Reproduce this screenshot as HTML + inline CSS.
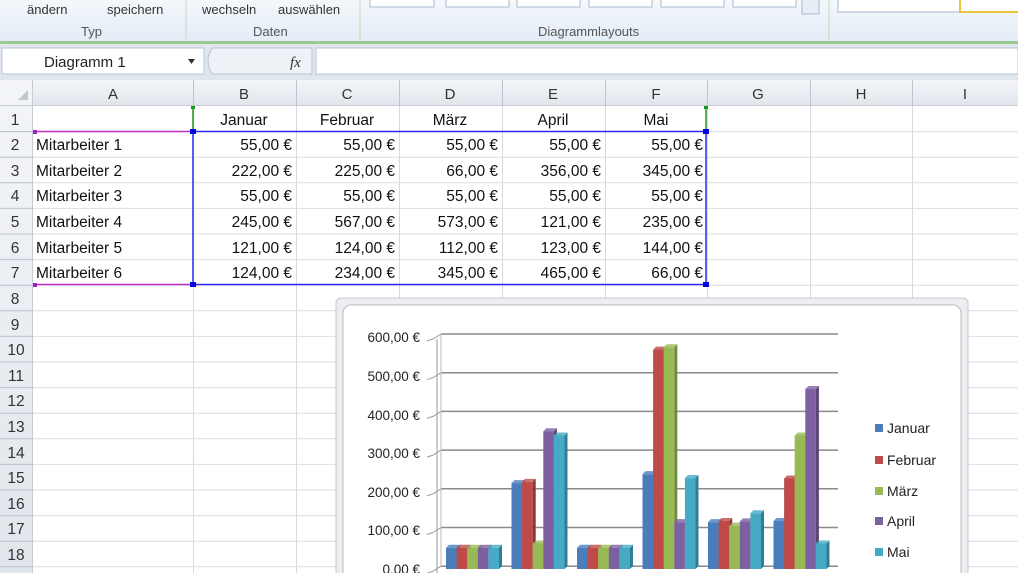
<!DOCTYPE html>
<html><head><meta charset="utf-8"><style>
body{margin:0;width:1018px;height:573px;overflow:hidden;background:#fff;font-family:"Liberation Sans",sans-serif}
svg{display:block}
</style></head><body>
<svg id="s" width="1018" height="573" xmlns="http://www.w3.org/2000/svg" font-family="Liberation Sans, sans-serif">
<defs>
<linearGradient id="rib" x1="0" y1="0" x2="0" y2="1"><stop offset="0" stop-color="#f4f8fc"/><stop offset="1" stop-color="#e4ecf6"/></linearGradient>
<linearGradient id="hdr" x1="0" y1="0" x2="0" y2="1"><stop offset="0" stop-color="#f3f5f8"/><stop offset="1" stop-color="#e1e6ec"/></linearGradient>
</defs>
<rect x="0" y="0" width="1018" height="42" fill="url(#rib)"/>
<line x1="186" y1="0" x2="186" y2="40" stroke="#c5d9b4"/>
<line x1="360" y1="0" x2="360" y2="40" stroke="#c5d9b4"/>
<line x1="829" y1="0" x2="829" y2="40" stroke="#c5d9b4"/>
<text x="27" y="14" font-size="13" fill="#333">ändern</text>
<text x="107" y="14" font-size="13" fill="#333">speichern</text>
<text x="81" y="36" font-size="13" fill="#555">Typ</text>
<text x="202" y="14" font-size="13" fill="#333">wechseln</text>
<text x="278" y="14" font-size="13" fill="#333">auswählen</text>
<text x="253" y="36" font-size="13" fill="#555">Daten</text>
<text x="538" y="36" font-size="13" fill="#555">Diagrammlayouts</text>
<g fill="#fff" stroke="#a8b8cc">
<rect x="370" y="-4" width="64" height="11"/><rect x="446" y="-4" width="63" height="11"/>
<rect x="517" y="-4" width="63" height="11"/><rect x="589" y="-4" width="63" height="11"/>
<rect x="661" y="-4" width="63" height="11"/><rect x="733" y="-4" width="63" height="11"/>
<rect x="802" y="-4" width="17" height="18" fill="#e8eef6"/>
<rect x="838" y="-4" width="200" height="16"/>
</g>
<rect x="960" y="-4" width="70" height="16" fill="#fff" stroke="#e8c43c" stroke-width="2"/>
<rect x="0" y="41" width="1018" height="3" fill="#9cc98c"/>
<rect x="0" y="44" width="1018" height="36" fill="#dfe6ee"/>
<rect x="2" y="48" width="202" height="26" fill="#fff" stroke="#b8c4d2"/>
<text x="44" y="67" font-size="15" fill="#222">Diagramm 1</text>
<path d="M188 59 l7 0 l-3.5 5z" fill="#333"/>
<path d="M212 48 h100 v26 h-100 q-8 -13 0 -26z" fill="#eef2f6" stroke="#b8c4d2"/>
<text x="290" y="67" font-size="15" font-style="italic" font-family="Liberation Serif, serif" fill="#333">fx</text>
<rect x="316" y="48" width="702" height="26" fill="#fff" stroke="#b8c4d2"/>
<rect x="0" y="80" width="1018" height="26" fill="url(#hdr)"/>
<rect x="0" y="80" width="33" height="493" fill="url(#hdr)"/>
<path d="M18 100 l10 -10 v10z" fill="#c0c8d2"/>
<g stroke="#c6ccd4">
<line x1="0" y1="105.5" x2="1018" y2="105.5"/><line x1="32.5" y1="80" x2="32.5" y2="573"/>
</g>
<g id="grid" stroke="#d9dde3"></g>
<g font-size="15" fill="#333" text-anchor="middle">
<text x="113" y="99">A</text><text x="244" y="99">B</text><text x="347" y="99">C</text><text x="450" y="99">D</text><text x="553" y="99">E</text><text x="656" y="99">F</text><text x="758" y="99">G</text><text x="861" y="99">H</text><text x="965" y="99">I</text>
</g>
<g font-size="15.5" fill="#333" text-anchor="middle">
<text x="15" y="125">1</text><text x="15" y="150">2</text><text x="15" y="176">3</text><text x="15" y="201">4</text><text x="15" y="227">5</text><text x="15" y="253">6</text><text x="15" y="278">7</text><text x="15" y="304">8</text><text x="15" y="330">9</text><text x="16" y="355">10</text><text x="16" y="381">11</text><text x="16" y="406">12</text><text x="16" y="432">13</text><text x="16" y="458">14</text><text x="16" y="483">15</text><text x="16" y="509">16</text><text x="16" y="534">17</text><text x="16" y="560">18</text>
</g>
<g font-size="15.5" fill="#111" text-anchor="middle">
<text x="244" y="125">Januar</text><text x="347" y="125">Februar</text><text x="450" y="125">März</text><text x="553" y="125">April</text><text x="656" y="125">Mai</text>
</g>
<g font-size="15.5" fill="#111">
<text x="36" y="150">Mitarbeiter 1</text><text x="36" y="176">Mitarbeiter 2</text><text x="36" y="201">Mitarbeiter 3</text><text x="36" y="227">Mitarbeiter 4</text><text x="36" y="253">Mitarbeiter 5</text><text x="36" y="278">Mitarbeiter 6</text>
</g>
<g font-size="15.5" fill="#111" text-anchor="end">
<text x="292" y="150">55,00 €</text><text x="395" y="150">55,00 €</text><text x="498" y="150">55,00 €</text><text x="601" y="150">55,00 €</text><text x="703" y="150">55,00 €</text>
<text x="292" y="176">222,00 €</text><text x="395" y="176">225,00 €</text><text x="498" y="176">66,00 €</text><text x="601" y="176">356,00 €</text><text x="703" y="176">345,00 €</text>
<text x="292" y="201">55,00 €</text><text x="395" y="201">55,00 €</text><text x="498" y="201">55,00 €</text><text x="601" y="201">55,00 €</text><text x="703" y="201">55,00 €</text>
<text x="292" y="227">245,00 €</text><text x="395" y="227">567,00 €</text><text x="498" y="227">573,00 €</text><text x="601" y="227">121,00 €</text><text x="703" y="227">235,00 €</text>
<text x="292" y="253">121,00 €</text><text x="395" y="253">124,00 €</text><text x="498" y="253">112,00 €</text><text x="601" y="253">123,00 €</text><text x="703" y="253">144,00 €</text>
<text x="292" y="278">124,00 €</text><text x="395" y="278">234,00 €</text><text x="498" y="278">345,00 €</text><text x="601" y="278">465,00 €</text><text x="703" y="278">66,00 €</text>
</g>
<line x1="193" y1="107" x2="193" y2="131" stroke="#1a9a1a" stroke-width="1.5"/>
<line x1="706" y1="107" x2="706" y2="131" stroke="#1a9a1a" stroke-width="1.5"/>
<rect x="191" y="106" width="4" height="3" fill="#1a9a1a"/><rect x="704" y="106" width="4" height="3" fill="#1a9a1a"/>
<line x1="35" y1="131.5" x2="193" y2="131.5" stroke="#c030c8" stroke-width="1.5"/>
<line x1="35" y1="284.5" x2="193" y2="284.5" stroke="#c030c8" stroke-width="1.5"/>
<rect x="33" y="130" width="4" height="4" fill="#a020c0"/><rect x="33" y="283" width="4" height="4" fill="#a020c0"/>
<rect x="193" y="131.5" width="513" height="153" fill="none" stroke="#2a2af0" stroke-width="1.5"/>
<rect x="190" y="129" width="6" height="5" fill="#0000e0"/><rect x="190" y="282" width="6" height="5" fill="#0000e0"/>
<rect x="703" y="129" width="6" height="5" fill="#0000e0"/><rect x="703" y="282" width="6" height="5" fill="#0000e0"/>
<rect x="336" y="298" width="632" height="290" rx="5" fill="#eceef1" stroke="#c4c8cc"/>
<rect x="343" y="305" width="618" height="280" rx="8" fill="#fff" stroke="#b8bcc0"/>
<g id="gl"></g>
<g font-size="13.5" fill="#222" text-anchor="end">
<text x="420" y="342">600,00 €</text><text x="420" y="381">500,00 €</text><text x="420" y="420">400,00 €</text><text x="420" y="458">300,00 €</text><text x="420" y="497">200,00 €</text><text x="420" y="535">100,00 €</text><text x="420" y="574">0,00 €</text>
</g>
<g id="bars"></g>
<g font-size="14" fill="#222">
<rect x="875" y="424" width="8" height="8" fill="#4a7ebb"/><text x="887" y="433">Januar</text>
<rect x="875" y="456" width="8" height="8" fill="#be4b48"/><text x="887" y="465">Februar</text>
<rect x="875" y="487" width="8" height="8" fill="#98b954"/><text x="887" y="496">März</text>
<rect x="875" y="517" width="8" height="8" fill="#7d60a0"/><text x="887" y="526">April</text>
<rect x="875" y="548" width="8" height="8" fill="#46aac5"/><text x="887" y="557">Mai</text>
</g>
</svg>
<script>
var NS="http://www.w3.org/2000/svg";
function el(p,t,a){var e=document.createElementNS(NS,t);for(var k in a)e.setAttribute(k,a[k]);p.appendChild(e);return e;}
var g=document.getElementById('grid');
var cols=[193,296,399,502,605,707,810,912];
cols.forEach(function(x){el(g,'line',{x1:x+.5,y1:80,x2:x+.5,y2:573,stroke:'#d6dae0'});});
for(var r=1;r<=19;r++){var y=106+r*25.6;el(g,'line',{x1:0,y1:y,x2:1018,y2:y,stroke:'#d9dde3'});}
cols.forEach(function(x){el(g,'line',{x1:x+.5,y1:80,x2:x+.5,y2:106,stroke:'#bcc4ce'});});
for(var r=1;r<=19;r++){var y=106+r*25.6;el(g,'line',{x1:0,y1:y,x2:33,y2:y,stroke:'#bcc4ce'});}
var gl=document.getElementById('gl');
for(var i=0;i<=6;i++){var y=334+i*38.7;el(gl,'line',{x1:441,y1:y,x2:838,y2:y,stroke:'#8a8a8a','stroke-width':1.5});el(gl,'line',{x1:433,y1:y+5,x2:441,y2:y,stroke:'#999'});el(gl,'line',{x1:427,y1:y+7,x2:433,y2:y+5,stroke:'#999'});}
el(gl,'line',{x1:437,y1:339,x2:437,y2:573,stroke:'#999'});
el(gl,'line',{x1:441,y1:334,x2:441,y2:566,stroke:'#bbb'});
var data=[[55,55,55,55,55],[222,225,66,356,345],[55,55,55,55,55],[245,567,573,121,235],[121,124,112,123,144],[124,234,345,465,66]];
var col=['#4a7ebb','#be4b48','#98b954','#7d60a0','#46aac5'];
var dk=['#33598a','#8c3533','#6d8a3a','#5a4575','#2f7e93'];
var b=document.getElementById('bars');
data.forEach(function(d,gi){d.forEach(function(v,m){var x=446+gi*65.5+m*10.6,h=v*0.387,y=569-h;
el(b,'path',{d:'M'+(x+10.6)+' '+y+' l3 -3 v'+h+' l-3 3z',fill:dk[m]});
el(b,'path',{d:'M'+x+' '+y+' l3 -3 h10.6 l-3 3z',fill:col[m],opacity:.8});
el(b,'rect',{x:x,y:y,width:10.6,height:h,fill:col[m]});});});
</script>
</body></html>
